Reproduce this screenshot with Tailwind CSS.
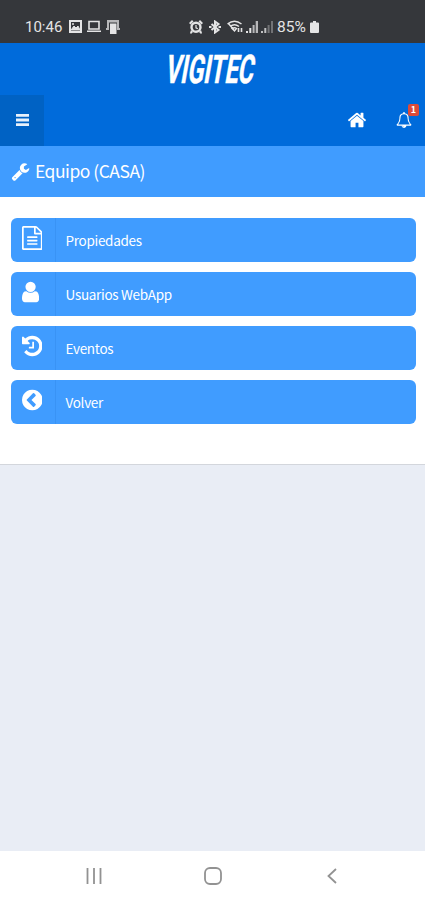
<!DOCTYPE html>
<html lang="es">
<head>
    <meta charset="UTF-8">
    <meta name="viewport" content="width=device-width, initial-scale=1.0">
    <title>Vigitec</title>
    <script src="https://cdn.jsdelivr.net/npm/@tailwindcss/browser@4"></script>
</head>
<body class="bg-[#e9edf5] h-[900px] flex flex-col overflow-hidden text-white font-['Noto_Sans_CJK_SC','Open_Sans',sans-serif]">
    <!-- Status bar -->
    <div class="h-[42.500px] shrink-0 bg-[#35373b] flex items-center pt-[11px] pl-[25px] text-[#e4e4e5] font-[Roboto,sans-serif]">
        <span class="w-[38px] text-[15px] leading-4">10:46</span>
        <svg class="ml-[6px] w-[13px] h-[13px]" viewBox="0 0 13 13" fill="none" stroke="currentColor">
            <path d="M1 1h11v11H1z" stroke-width="2"/>
            <path d="M2 10l3-4 2 2 2-2 2 4z" fill="currentColor"/>
            <path d="M3 4h2" stroke-width="1.4"/>
        </svg>
        <svg class="ml-[4px] w-[16px] h-[13px]" viewBox="0 0 16 13" fill="none" stroke="currentColor" stroke-width="1.6">
            <path d="M3 1.500h10v7.500H3zM1 11.300h14"/>
        </svg>
        <svg class="ml-[4px] w-[14px] h-[14px]" viewBox="0 0 14 14" fill="currentColor">
            <path d="M1 0h12v9h-2V2.500H3V9H1zM0 8h3v2H0zM11 8h3v2h-3z" opacity=".75"/>
            <path d="M4 3.500h6.500V14H4z"/>
        </svg>
        <svg class="ml-[69px] w-[14px] h-[14px]" viewBox="0 0 14 14" fill="currentColor">
            <path d="M0 3l3-3 1.500 1.500-3 3zM14 3l-3-3-1.500 1.500 3 3zM2 10l2 2-2 2-1-1zM12 10l-2 2 2 2 1-1z"/>
            <circle cx="7" cy="7.300" r="4.500" fill="none" stroke="currentColor" stroke-width="2.400"/>
            <path d="M7 5v2.800l1.800 1" fill="none" stroke="currentColor" stroke-width="1.200"/>
        </svg>
        <svg class="ml-[6px] w-[12px] h-[14px]" viewBox="0 0 12 14" fill="none" stroke="currentColor" stroke-width="2">
            <path d="M2.500 4l7 6L6 12.500v-11L9.500 4l-7 6"/>
            <path d="M0 7h2.500M9.500 7H12"/>
        </svg>
        <svg class="ml-[6px] w-[16px] h-[13px]" viewBox="0 0 16 13" fill="none" stroke="currentColor" stroke-width="1.500">
            <path d="M0.500 4Q7.500-1.500 14.500 4M3 6.500Q7.500 3 12 6.500M5 8.500Q7.500 7 9.500 8.500L7.500 11zM1 3l6 7"/>
            <path d="M11.500 12V8M14.500 8v4" stroke-width="1.600"/>
        </svg>
        <svg class="ml-[3px] w-[12px] h-[13px]" viewBox="0 0 12 13" fill="currentColor">
            <path d="M0 11h2v2H0zM3.300 8h2v5h-2z"/>
            <path d="M6.600 5h2v8h-2zM9.700 1H12v12H9.700z" opacity=".75"/>
        </svg>
        <svg class="ml-[3px] w-[12px] h-[13px]" viewBox="0 0 12 13" fill="currentColor">
            <path d="M0 11h2v2H0zM3.300 8h2v5h-2z" opacity=".8"/>
            <path d="M6.600 5h2v8h-2zM10 1h2v12h-2z" opacity=".35"/>
        </svg>
        <span class="ml-[4px] w-[32px] text-[15.500px] leading-4">85%</span>
        <svg class="ml-px w-[9px] h-[12px]" viewBox="0 0 9 12" fill="currentColor">
            <path d="M3 0h3v1.500h2q1 0 1 1V11q0 1-1 1H1q-1 0-1-1V2.500q0-1 1-1h2z"/>
        </svg>
    </div>

    <!-- Header -->
    <header class="h-[103.500px] shrink-0 bg-[#006bdb] flex flex-col">
        <div class="h-[52px] flex justify-center">
            <svg class="w-[120px] h-[52px]" viewBox="0 0 120 52" fill="#fff" stroke="#fff" stroke-width=".5">
                <text transform="translate(11.500 40) skewX(-10) scale(.54 1)" textLength="163" lengthAdjust="spacingAndGlyphs" class="font-[Roboto,sans-serif] font-bold text-[39.500px]">VIGITEC</text>
            </svg>
        </div>
        <div class="h-[51.500px] flex items-center">
            <a href="#" class="w-11 h-full bg-[#0062c4] flex items-center justify-center">
                <svg class="w-[13px] h-[12px]" viewBox="0 0 13 12" fill="#e8f1fb"><path d="M0 0h13v2.800H0zM0 4.600h13v2.800H0zM0 9.200h13V12H0z"/></svg>
            </a>
            <a href="#" class="ml-auto mr-[29px]">
                <svg class="w-[20px] h-[20px]" viewBox="0 0 1792 1792" fill="#fff"><path d="M1472 992v480q0 26-19 45t-45 19h-384v-384h-256v384h-384q-26 0-45-19t-19-45v-480q0-1 .5-3t.5-3l575-474 575 474q1 2 1 6zm223-69l-62 74q-8 9-21 11h-3q-13 0-21-7l-692-577-692 577q-12 8-24 7-13-2-21-11l-62-74q-8-10-7-23.500t11-21.500l719-599q32-26 76-26t76 26l244 204v-195q0-14 9-23t23-9h192q14 0 23 9t9 23v408l219 182q10 8 11 21.500t-7 23.500z"/></svg>
            </a>
            <a href="#" class="relative mr-[13px]">
                <svg class="w-[16px] h-[16px]" viewBox="0 0 1792 1792" fill="#fff"><path d="M912 1696q0-16-16-16-59 0-101.500-42.500t-42.500-101.500q0-16-16-16t-16 16q0 73 51.500 124.500t124.500 51.500q16 0 16-16zm-666-288h1300q-266-300-266-832 0-51-24-105t-69-103-121.500-80.500-169.500-31.500-169.500 31.500-121.500 80.500-69 103-24 105q0 532-266 832zm1482 0q0 52-38 90t-90 38h-448q0 106-75 181t-181 75-181-75-75-181h-448q-52 0-90-38t-38-90q50-42 91-88t85-119.500 74.500-158.500 50-206 19.500-260q0-152 117-282.500t307-158.500q-8-19-8-39 0-40 28-68t68-28 68 28 28 68q0 20-8 39 190 28 307 158.500t117 282.500q0 139 19.500 260t50 206 74.500 158.500 85 119.500 91 88z"/></svg>
                <span class="absolute left-[12px] -top-[8px] w-[11px] h-[12px] rounded-xs bg-[#dd4b39] text-[9px] leading-[12px] font-bold text-center">1</span>
            </a>
        </div>
    </header>

    <!-- Title -->
    <div class="h-[51px] shrink-0 bg-[#409cff] flex items-center pl-[11px]">
        <svg class="w-[19px] h-[19px]" viewBox="0 0 1792 1792" fill="#fff"><path d="M448 1472q0-26-19-45t-45-19-45 19-19 45 19 45 45 19 45-19 19-45zm644-420l-682 682q-37 37-90 37-52 0-91-37l-106-108q-38-36-38-90 0-53 38-91l681-681q39 98 114.500 173.500t173.500 114.500zm634-435q0 39-23 106-47 134-164.500 217.500t-258.500 83.500q-185 0-316.500-131.500t-131.500-316.500 131.500-316.500 316.500-131.500q58 0 121.500 16.500t107.500 46.500q16 11 16 28t-16 28l-293 169v224l193 107q5-3 79-48.500t135.500-81 70.500-35.500q15 0 23.500 10t8.500 25z"/></svg>
        <h1 class="ml-[5px] pb-[2px] text-[17.500px] leading-6 tracking-[-0.5px]">Equipo (CASA)</h1>
    </div>

    <!-- Menu -->
    <main class="h-[268px] shrink-0 bg-white border-b border-[#d3d6dc] px-[10.500px] pt-[21px] flex flex-col gap-[10.500px] text-[13.500px] tracking-[-0.300px]">
        <a href="#" class="w-[405px] h-[43.500px] rounded-md bg-[#409cff] flex items-center">
            <span class="w-[45px] h-full border-r border-[#3993f5] flex items-center pl-[11px] pb-[3px]">
                <svg class="h-6 w-auto" viewBox="128 0 1536 1792" fill="#fff"><path d="M1596 380q28 28 48 76t20 88v1152q0 40-28 68t-68 28h-1344q-40 0-68-28t-28-68v-1600q0-40 28-68t68-28h896q40 0 88 20t76 48zm-444-244v376h376q-10-29-22-41l-313-313q-12-12-41-22zm384 1528v-1024h-416q-40 0-68-28t-28-68v-416h-768v1536h1280zm-1024-864q0-14 9-23t23-9h704q14 0 23 9t9 23v64q0 14-9 23t-23 9h-704q-14 0-23-9t-9-23v-64zm736 224q14 0 23 9t9 23v64q0 14-9 23t-23 9h-704q-14 0-23-9t-9-23v-64q0-14 9-23t23-9h704zm0 256q14 0 23 9t9 23v64q0 14-9 23t-23 9h-704q-14 0-23-9t-9-23v-64q0-14 9-23t23-9h704z"/></svg>
            </span>
            <span class="ml-[10px]">Propiedades</span>
        </a>
        <a href="#" class="w-[405px] h-[43.500px] rounded-md bg-[#409cff] flex items-center">
            <span class="w-[45px] h-full border-r border-[#3993f5] flex items-center pl-[11px] pb-[3px]">
                <svg class="h-6 w-auto" viewBox="256 0 1280 1792" fill="#fff"><path d="M1536 1399q0 109-62.500 187t-150.500 78h-854q-88 0-150.500-78t-62.500-187q0-85 8.500-160.500t31.500-152 58.500-131 94-89 134.500-34.500q131 128 313 128t313-128q76 0 134.500 34.500t94 89 58.500 131 31.500 152 8.500 160.500zm-256-887q0 159-112.500 271.500t-271.500 112.500-271.500-112.500-112.500-271.500 112.500-271.500 271.500-112.500 271.500 112.500 112.500 271.500z"/></svg>
            </span>
            <span class="ml-[10px]">Usuarios WebApp</span>
        </a>
        <a href="#" class="w-[405px] h-[43.500px] rounded-md bg-[#409cff] flex items-center">
            <span class="w-[45px] h-full border-r border-[#3993f5] flex items-center pl-[11px] pb-[3px]">
                <svg class="h-6 w-auto" viewBox="128 0 1536 1792" fill="#fff"><path d="M1664 896q0 156-61 298t-164 245-245 164-298 61q-172 0-327-72.500t-264-204.500q-7-10-6.500-22.500t8.500-20.500l137-138q10-9 25-9 16 2 23 12 73 95 179 147t225 52q104 0 198.500-40.500t163.500-109.500 109.500-163.500 40.500-198.500-40.500-198.500-109.500-163.500-163.500-109.500-198.500-40.500q-98 0-188 35.500t-160 101.500l137 138q31 30 14 69-17 40-59 40h-448q-26 0-45-19t-19-45v-448q0-42 40-59 39-17 69 14l130 129q107-101 244.500-156.500t284.500-55.500q156 0 298 61t245 164 164 245 61 298zm-640-288v448q0 14-9 23t-23 9h-320q-14 0-23-9t-9-23v-64q0-14 9-23t23-9h224v-352q0-14 9-23t23-9h64q14 0 23 9t9 23z"/></svg>
            </span>
            <span class="ml-[10px]">Eventos</span>
        </a>
        <a href="#" class="w-[405px] h-[43.500px] rounded-md bg-[#409cff] flex items-center">
            <span class="w-[45px] h-full border-r border-[#3993f5] flex items-center pl-[11px] pb-[3px]">
                <svg class="h-6 w-auto" viewBox="128 0 1536 1792" fill="#fff"><path d="M1037 1395l102-102q19-19 19-45t-19-45l-307-307 307-307q19-19 19-45t-19-45l-102-102q-19-19-45-19t-45 19l-454 454q-19 19-19 45t19 45l454 454q19 19 45 19t45-19zm627-499q0 209-103 385.500t-279.500 279.500-385.500 103-385.500-103-279.500-279.500-103-385.500 103-385.500 279.500-279.500 385.500-103 385.500 103 279.500 279.500 103 385.500z"/></svg>
            </span>
            <span class="ml-[10px]">Volver</span>
        </a>
    </main>

    <!-- Android navigation -->
    <div class="mt-auto h-[49px] shrink-0 bg-white flex items-center pl-[86px]">
        <svg class="w-[16px] h-[16px]" viewBox="0 0 16 16" stroke="#929292" stroke-width="1.800"><path d="M1.500 0v16M8 0v16M14.500 0v16"/></svg>
        <svg class="ml-[102px] w-[18px] h-[18px]" viewBox="0 0 18 18" fill="none" stroke="#929292" stroke-width="1.800"><rect x="1" y="1" width="16" height="16" rx="5"/></svg>
        <svg class="ml-[105px] w-[10px] h-[16px]" viewBox="0 0 10 16" fill="none" stroke="#929292" stroke-width="1.800"><path d="M9 1L1.500 8 9 15"/></svg>
    </div>
</body>
</html>
